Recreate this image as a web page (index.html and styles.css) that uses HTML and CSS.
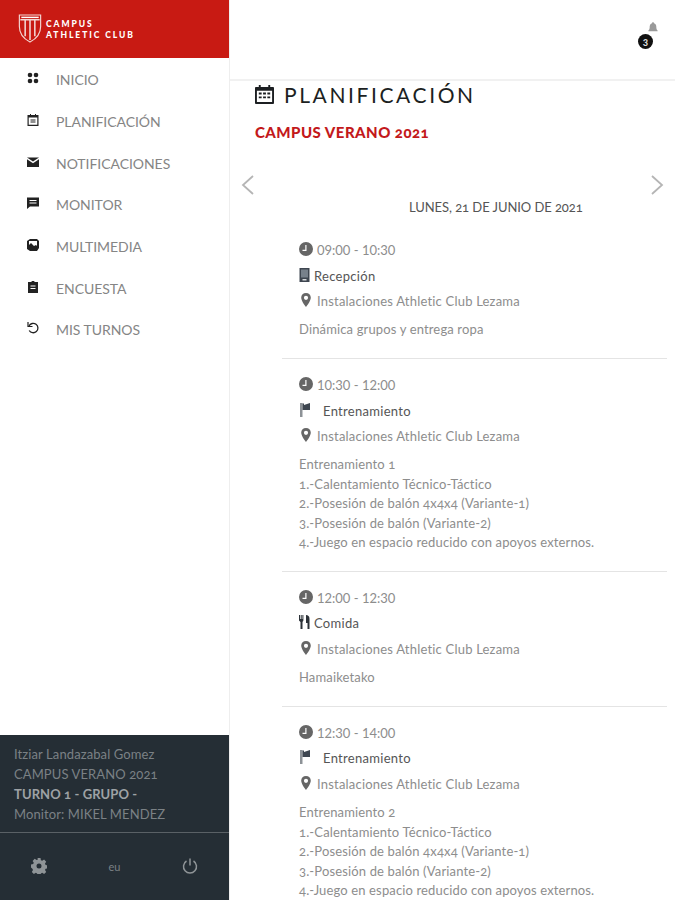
FILE: index.html
```html
<!DOCTYPE html>
<html lang="es">
<head>
    <meta charset="UTF-8">
    <meta name="viewport" content="width=device-width, initial-scale=1.0">
    <title>Planificación</title>
    <link rel="stylesheet" href="styles.css">
</head>
<body>

<div class="app">
    <aside class="sidebar">
        <div class="brand">
            <svg class="shield" viewBox="0 0 24 30">
                <path d="M1 1h22v12c0 8-5 13-11 16C6 26 1 21 1 13z" fill="none" stroke="#f3d6d3" stroke-width="1.2"/>
                <path d="M2 6h20M12 6v21M7 6v17M17 6v17" stroke="#f3d6d3" stroke-width="1.6" fill="none"/>
                <path d="M3 3.5h18" stroke="#fff" stroke-width="1.5"/>
            </svg>
            <div class="brand-name">CAMPUS<br>ATHLETIC CLUB</div>
        </div>

        <nav class="menu">
            <a class="menu-item">
                <svg class="menu-icon" viewBox="0 0 12 12"><circle cx="3" cy="3" r="2.3"/><circle cx="9" cy="3" r="2.3"/><circle cx="3" cy="9" r="2.3"/><circle cx="9" cy="9" r="2.3"/></svg>
                INICIO
            </a>
            <a class="menu-item">
                <svg class="menu-icon" viewBox="0 0 12 12"><path d="M3 0h1v1h4V0h1v1h2.500v11H.5V1H3zM1.700 3.500v7.300h8.600V3.500zM3.500 5.500h5v1h-5zM3.500 7.500h5v1h-5z" fill-rule="evenodd"/></svg>
                PLANIFICACIÓN
            </a>
            <a class="menu-item">
                <svg class="menu-icon" viewBox="0 0 12 12"><path d="M0 1.500h12L6 5.500zM0 3.200l6 4 6-4V11H0z"/></svg>
                NOTIFICACIONES
            </a>
            <a class="menu-item">
                <svg class="menu-icon" viewBox="0 0 12 12"><path d="M0 .5h12v9H3L0 12zM2.500 3v1h7V3zM2.500 5.500v1h7v-1z" fill-rule="evenodd"/></svg>
                MONITOR
            </a>
            <a class="menu-item">
                <svg class="menu-icon" viewBox="0 0 12 12"><path d="M3 0h7l2 2v7l-2 3H3L0 10V2zM2 2v4l2-2 3 3 2-1 1 1V2z" fill-rule="evenodd"/></svg>
                MULTIMEDIA
            </a>
            <a class="menu-item">
                <svg class="menu-icon" viewBox="0 0 12 12"><path d="M4.500 1a1.500 1.500 0 0 1 3 0H11v11H1V1zM3.500 4.500v1h5v-1zM3.500 7v1h5V7z" fill-rule="evenodd"/></svg>
                ENCUESTA
            </a>
            <a class="menu-item">
                <svg class="menu-icon" viewBox="0 0 12 12"><path d="M1 0v4.500h4.500" fill="none" stroke="#222" stroke-width="1.200"/><path d="M2 4a4.700 4.700 0 1 1 .2 4.500" fill="none" stroke="#222" stroke-width="1.300"/></svg>
                MIS TURNOS
            </a>
        </nav>

        <div class="profile">
            <div class="profile-info">
                <div>Itziar Landazabal Gomez</div>
                <div>CAMPUS VERANO 2021</div>
                <div class="profile-group">TURNO 1 - GRUPO -</div>
                <div>Monitor: MIKEL MENDEZ</div>
            </div>
            <div class="profile-actions">
                <svg class="action-icon" viewBox="0 0 16 16"><path d="M6.500 0h3l.4 2.200 1.300.6 1.900-1.200 2.100 2.100-1.200 1.900.6 1.300 2.200.4v3l-2.200.4-.6 1.300 1.200 1.900-2.100 2.100-1.900-1.200-1.300.6-.4 2.200h-3l-.4-2.200-1.300-.6-1.900 1.200-2.100-2.100 1.200-1.900-.6-1.300L0 9.500v-3l2.200-.4.6-1.300L1.600 2.900l2.100-2.100 1.900 1.200 1.300-.6zM8 5.500a2.500 2.500 0 1 0 0 5 2.500 2.500 0 0 0 0-5z" fill="#8f9497" fill-rule="evenodd"/></svg>
                <span class="lang">eu</span>
                <svg class="action-icon" viewBox="0 0 16 16"><path d="M4.500 3A6.500 6.500 0 1 0 11.500 3M8 .5v7" fill="none" stroke="#8f9497" stroke-width="1.500"/></svg>
            </div>
        </div>
    </aside>

    <main class="content">
        <header class="topbar">
            <div class="bell">
                <svg class="bell-icon" viewBox="0 0 12 14"><path d="M6 0c1 0 1.300.8 1.300 1.300C9.500 2 10 4 10 6.500c0 2 .8 3 1.500 3.500v1H.5v-1C1.200 9.500 2 8.500 2 6.500 2 4 2.500 2 4.700 1.300 4.700.8 5 0 6 0z" fill="#9a9a9a"/></svg>
                <span class="bell-count">3</span>
            </div>
        </header>

        <div class="page">
            <h1 class="page-title">
                <svg class="title-icon" viewBox="0 0 20 20"><path d="M4 0h2v2h8V0h2v2h3a1 1 0 0 1 1 1v16a1 1 0 0 1-1 1H1a1 1 0 0 1-1-1V3a1 1 0 0 1 1-1h3zM2 6v12h16V6z" fill="#1c1f22" fill-rule="evenodd"/><path d="M4 8h3v2H4zM8.500 8h3v2h-3zM13 8h3v2h-3zM4 12h3v2H4zM8.500 12h3v2h-3zM13 12h3v2h-3z" fill="#1c1f22"/></svg>
                PLANIFICACIÓN
            </h1>
            <h2 class="campus">CAMPUS VERANO 2021</h2>

            <div class="day-nav">
                <svg class="arrow" viewBox="0 0 14 22"><path d="M12 2 2 11l10 9" fill="none" stroke="#b5b5b5" stroke-width="1.800"/></svg>
                <svg class="arrow" viewBox="0 0 14 22"><path d="M2 2l10 9-10 9" fill="none" stroke="#b5b5b5" stroke-width="1.800"/></svg>
            </div>
            <div class="day-title">LUNES, 21 DE JUNIO DE 2021</div>

            <section class="event">
                <div class="event-row time"><svg class="ev-icon" viewBox="0 0 14 14"><use href="#clock"/></svg>09:00 - 10:30</div>
                <div class="event-row type"><svg class="ev-icon small" viewBox="0 0 10 14"><path d="M0 0h10v14H0z" fill="#3e4650"/><path d="M1.500 1.500h7v8h-7z" fill="#77818b"/><path d="M3 11h4v1.500H3z" fill="#d5d8db"/></svg>Recepción</div>
                <div class="event-row place"><svg class="ev-icon" viewBox="0 0 14 14"><use href="#pin"/></svg>Instalaciones Athletic Club Lezama</div>
                <div class="event-desc">Dinámica grupos y entrega ropa</div>
            </section>

            <section class="event">
                <div class="event-row time"><svg class="ev-icon" viewBox="0 0 14 14"><use href="#clock"/></svg>10:30 - 12:00</div>
                <div class="event-row type wide"><svg class="ev-icon" viewBox="0 0 14 14"><use href="#flag"/></svg>Entrenamiento</div>
                <div class="event-row place"><svg class="ev-icon" viewBox="0 0 14 14"><use href="#pin"/></svg>Instalaciones Athletic Club Lezama</div>
                <div class="event-desc">Entrenamiento 1<br>1.-Calentamiento Técnico-Táctico<br>2.-Posesión de balón 4x4x4 (Variante-1)<br>3.-Posesión de balón (Variante-2)<br>4.-Juego en espacio reducido con apoyos externos.</div>
            </section>

            <section class="event">
                <div class="event-row time"><svg class="ev-icon" viewBox="0 0 14 14"><use href="#clock"/></svg>12:00 - 12:30</div>
                <div class="event-row type"><svg class="ev-icon small" viewBox="0 0 11 14"><path d="M0 0h1v4h.7V0h1v4h.7V0h1v5.500L3.500 7v7h-2V7L0 5.500zM7 0c2 0 3.500 1 3.500 4v10h-2V8H7z" fill="#2c3238"/></svg>Comida</div>
                <div class="event-row place"><svg class="ev-icon" viewBox="0 0 14 14"><use href="#pin"/></svg>Instalaciones Athletic Club Lezama</div>
                <div class="event-desc">Hamaiketako</div>
            </section>

            <section class="event">
                <div class="event-row time"><svg class="ev-icon" viewBox="0 0 14 14"><use href="#clock"/></svg>12:30 - 14:00</div>
                <div class="event-row type wide"><svg class="ev-icon" viewBox="0 0 14 14"><use href="#flag"/></svg>Entrenamiento</div>
                <div class="event-row place"><svg class="ev-icon" viewBox="0 0 14 14"><use href="#pin"/></svg>Instalaciones Athletic Club Lezama</div>
                <div class="event-desc">Entrenamiento 2<br>1.-Calentamiento Técnico-Táctico<br>2.-Posesión de balón 4x4x4 (Variante-1)<br>3.-Posesión de balón (Variante-2)<br>4.-Juego en espacio reducido con apoyos externos.</div>
            </section>
        </div>
    </main>
</div>

<svg class="icon-defs" width="0" height="0">
    <defs>
        <g id="clock"><path d="M7 0a7 7 0 1 1 0 14A7 7 0 0 1 7 0zM6.300 3v4.700H3.500v1.200h4V3z" fill="#666" fill-rule="evenodd"/></g>
        <g id="pin"><path d="M7 0c2.800 0 4.800 2 4.800 4.700C11.800 8 7 14 7 14S2.200 8 2.200 4.700C2.200 2 4.200 0 7 0zm0 2.700a2.100 2.100 0 1 0 0 4.200 2.100 2.100 0 0 0 0-4.200z" fill="#666" fill-rule="evenodd"/></g>
        <g id="flag"><path d="M1 0h2.500v14H1z" fill="#8d9297"/><path d="M3.500 .5h1.500V2L11 0v7H3.500z" fill="#3e4650"/></g>
    </defs>
</svg>

</body>
</html>
```

FILE: styles.css
```css
html, body {
    margin: 0;
    height: 100%;
    overflow: hidden;
}
body {
    font-family: 'Lato', 'Liberation Sans', sans-serif;
    font-variant-numeric: oldstyle-nums;
    background: #fff;
    color: #555;
}
.app {
    display: flex;
    height: 900px;
}
.sidebar {
    width: 229px;
    flex: none;
    display: flex;
    flex-direction: column;
    border-right: 1px solid #eee;
}
.brand {
    height: 58px;
    background: #c81a13;
    display: flex;
    align-items: center;
    padding-left: 18px;
    gap: 4px;
}
.shield {
    width: 24px;
    height: 29px;
    margin-top: -1px;
}
.brand-name {
    color: #fff;
    font-weight: 900;
    font-size: 8.5px;
    line-height: 10.5px;
    letter-spacing: 1.95px;
    margin-top: 1px;
}
.menu {
    flex: 1;
    padding-top: 1px;
}
.menu-item {
    display: flex;
    align-items: center;
    height: 41.7px;
    padding-left: 27px;
    font-size: 14px;
    letter-spacing: -0.05px;
    color: #858585;
}
.menu-icon {
    width: 12px;
    height: 12px;
    margin-right: 17px;
    margin-top: -3px;
    fill: #222;
}
.profile {
    height: 165px;
    background: #252e35;
}
.profile-info {
    height: 98px;
    box-sizing: border-box;
    padding: 9px 14px 0;
    border-bottom: 1px solid #5a6166;
    font-size: 13px;
    line-height: 20px;
    letter-spacing: 0.1px;
    color: #7b8185;
}
.profile-group {
    font-weight: 700;
    color: #9ea2a5;
}
.profile-actions {
    display: flex;
    align-items: center;
    justify-content: space-between;
    padding: 25px 31px 0;
}
.action-icon {
    width: 16px;
    height: 16px;
}
.lang {
    font-size: 11px;
    color: #7b8185;
}
.content {
    flex: 1;
    min-width: 0;
}
.topbar {
    height: 79px;
    border-bottom: 2px solid #f1f1f1;
    position: relative;
}
.bell {
    position: absolute;
    left: 405px;
    top: 22px;
    width: 24px;
    height: 28px;
}
.bell-icon {
    position: absolute;
    right: 1px;
    top: 0;
    width: 10px;
    height: 12px;
}
.bell-count {
    position: absolute;
    left: 3px;
    top: 12px;
    width: 15px;
    height: 15px;
    border-radius: 50%;
    background: #111;
    color: #ddd;
    font-size: 10px;
    font-weight: 900;
    line-height: 15px;
    text-align: center;
}
.page {
    padding-left: 25px;
}
.page-title {
    display: flex;
    align-items: center;
    margin: 0;
    height: 26px;
    gap: 10px;
    font-size: 21px;
    font-weight: 400;
    letter-spacing: 2.6px;
    color: #1c1f22;
}
.title-icon {
    width: 19px;
    height: 19px;
}
.campus {
    margin: 16px 0 0;
    font-size: 15px;
    line-height: 18px;
    font-weight: 900;
    letter-spacing: 0.47px;
    color: #c3191b;
}
.day-nav {
    display: flex;
    justify-content: space-between;
    margin: 33px 11px 0 -14px;
}
.arrow {
    width: 14px;
    height: 22px;
    display: block;
}
.day-title {
    margin-top: 2px;
    padding-left: 154px;
    font-size: 13px;
    line-height: 18px;
    letter-spacing: -0.07px;
    color: #555;
}
.event {
    margin: 13px 8px 0 27px;
    padding-left: 17px;
    padding-bottom: 18px;
    border-bottom: 1px solid #e4e4e4;
}
.event:first-of-type {
    margin-top: 21px;
}
.event-row {
    display: flex;
    align-items: center;
    height: 25.8px;
    font-size: 13px;
    color: #8d8d8d;
}
.ev-icon {
    width: 14px;
    height: 14px;
    margin-right: 4px;
    flex: none;
    margin-top: -2px;
}
.ev-icon.small {
    width: 11px;
}
.time {
    font-variant-numeric: lining-nums;
}
.type {
    color: #555;
    letter-spacing: 0.3px;
}
.place {
    letter-spacing: 0.2px;
}
.wide .ev-icon {
    margin-right: 10px;
}
.event-desc {
    margin-top: 6px;
    font-size: 13px;
    line-height: 19.5px;
    letter-spacing: 0.14px;
    color: #8d8d8d;
    white-space: nowrap;
}
.icon-defs {
    position: absolute;
}
```
